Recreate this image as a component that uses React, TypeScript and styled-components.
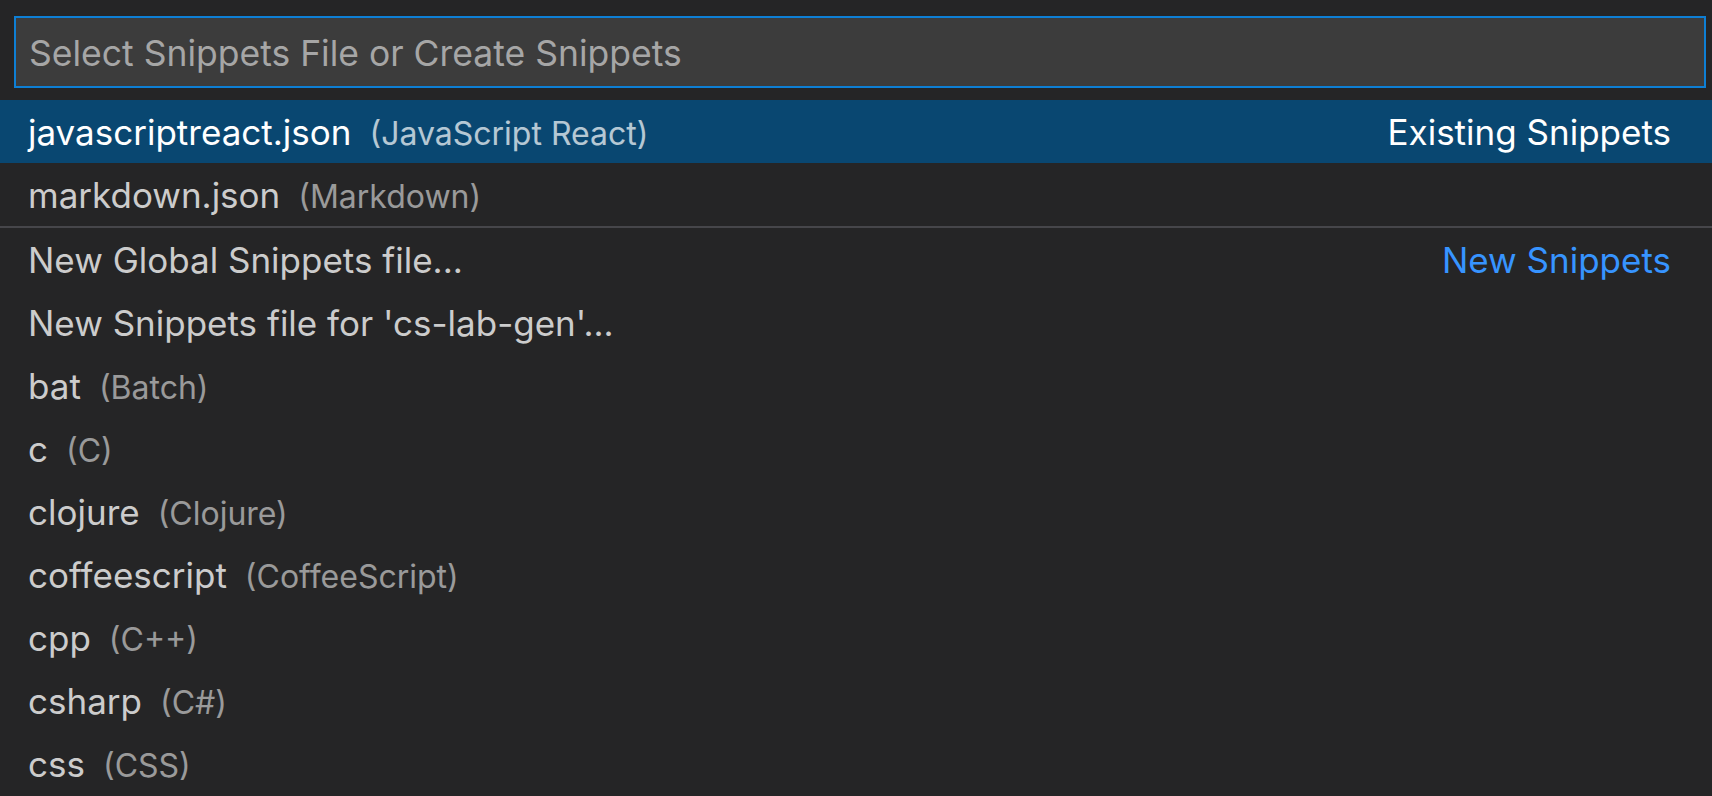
import React from 'react';
import styled, { createGlobalStyle } from 'styled-components';

const GlobalStyle = createGlobalStyle`
  html, body {
    margin: 0;
    padding: 0;
    background: #252526;
    overflow: hidden;
  }
  * {
    box-sizing: border-box;
  }
`;

const QuickPick = styled.div`
  width: 1712px;
  height: 796px;
  padding-top: 16px;
  background: #252526;
  font-family: Inter, "Noto Sans", sans-serif;
  color: #cccccc;
  overflow: hidden;
`;

const InputBox = styled.div`
  margin: 0 6px 0 14px;
  height: 72px;
  border: 2px solid #0e7fd4;
  background: #3c3c3c;
  display: flex;
  align-items: center;
`;

const FilterInput = styled.input`
  flex: 1;
  height: 100%;
  border: none;
  outline: none;
  background: transparent;
  padding: 2px 0 0 13px;
  font-family: inherit;
  font-size: 35.5px;
  color: #cccccc;

  &::placeholder {
    color: #a6a6a6;
  }
`;

const List = styled.div`
  margin-top: 12px;
  display: flex;
  flex-direction: column;
`;

// content-box so the separator line sits above the row instead of eating into it
const Row = styled.div<{ $selected?: boolean; $separator?: boolean }>`
  box-sizing: content-box;
  height: 63px;
  display: flex;
  align-items: center;
  padding: 0 41px 0 28px;
  font-size: 35px;
  white-space: nowrap;
  background: ${p => (p.$selected ? '#094771' : 'transparent')};
  color: ${p => (p.$selected ? '#ffffff' : '#cccccc')};
  border-top: ${p => (p.$separator ? '2px solid #46464a' : 'none')};
`;

const LabelGroup = styled.span`
  flex: 1;
`;

const Description = styled.span`
  margin-left: 18px;
  font-size: 32px;
  opacity: 0.7;
`;

const Detail = styled.span<{ $link?: boolean }>`
  margin-left: auto;
  color: ${p => (p.$link ? '#3794ff' : 'inherit')};
`;

interface PickItem {
  label: string;
  description?: string;
  group?: string;
  link?: boolean;
  separator?: boolean;
}

const items: PickItem[] = [
  { label: 'javascriptreact.json', description: '(JavaScript React)', group: 'Existing Snippets' },
  { label: 'markdown.json', description: '(Markdown)' },
  { label: 'New Global Snippets file...', group: 'New Snippets', link: true, separator: true },
  { label: "New Snippets file for 'cs-lab-gen'..." },
  { label: 'bat', description: '(Batch)' },
  { label: 'c', description: '(C)' },
  { label: 'clojure', description: '(Clojure)' },
  { label: 'coffeescript', description: '(CoffeeScript)' },
  { label: 'cpp', description: '(C++)' },
  { label: 'csharp', description: '(C#)' },
  { label: 'css', description: '(CSS)' },
];

const App: React.FC = () => {
  return (
    <>
      <GlobalStyle />
      <QuickPick>
        <InputBox>
          <FilterInput placeholder="Select Snippets File or Create Snippets" />
        </InputBox>
        <List>
          {items.map((item, index) => (
            <Row key={index} $selected={index === 0} $separator={item.separator}>
              <LabelGroup>
                {item.label}
                {item.description && <Description>{item.description}</Description>}
              </LabelGroup>
              {item.group && <Detail $link={item.link}>{item.group}</Detail>}
            </Row>
          ))}
        </List>
      </QuickPick>
    </>
  );
};

export default App;
